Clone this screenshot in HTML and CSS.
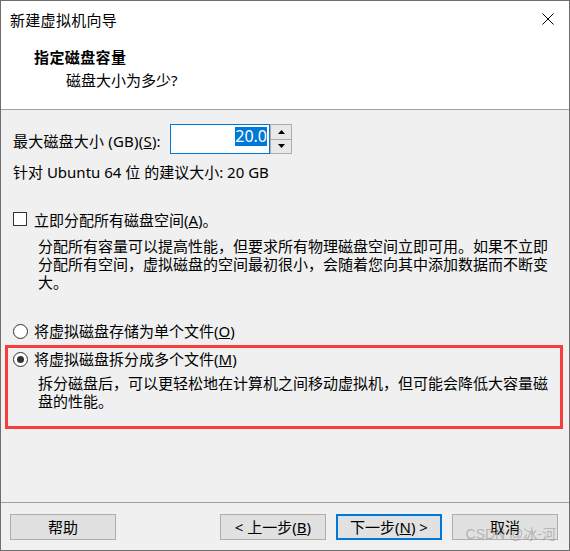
FILE: index.html
```html
<!DOCTYPE html>
<html lang="zh-CN">
<head>
<meta charset="utf-8">
<title>新建虚拟机向导</title>
<link rel="stylesheet" href="styles.css">
</head>
<body>
<div class="window">
  <div class="top">
    <div class="titlebar">
      <span class="title">新建虚拟机向导</span>
      <svg class="close" width="12" height="12" viewBox="0 0 12 12"><path d="M0.5 0.5 L11.5 11.5 M11.5 0.5 L0.5 11.5" stroke="#000" stroke-width="1" fill="none"/></svg>
    </div>
    <div class="header">
      <div class="h-title">指定磁盘容量</div>
      <div class="h-sub">磁盘大小为多少?</div>
    </div>
  </div>
  <div class="body">
    <div class="row size-row">
      <span class="size-label">最大磁盘大小 (GB)(<u>S</u>):</span>
      <div class="spin">
        <div class="spin-input"><span class="sel">20.0</span></div>
        <div class="spin-btns">
          <div class="spin-btn"><svg width="7" height="4" viewBox="0 0 7 4"><path d="M3.5 0 L7 4 L0 4 Z" fill="#000"/></svg></div>
          <div class="spin-btn"><svg width="7" height="4" viewBox="0 0 7 4"><path d="M0 0 L7 0 L3.5 4 Z" fill="#000"/></svg></div>
        </div>
      </div>
    </div>
    <div class="row rec">针对 Ubuntu 64 位 的建议大小: 20 GB</div>
    <div class="row check-row">
      <span class="checkbox"></span>
      <span>立即分配所有磁盘空间(<u>A</u>)。</span>
    </div>
    <div class="desc desc1">分配所有容量可以提高性能，但要求所有物理磁盘空间立即可用。如果不立即<br>分配所有空间，虚拟磁盘的空间最初很小，会随着您向其中添加数据而不断变<br>大。</div>
    <div class="row radio-row r1">
      <span class="radio"></span>
      <span>将虚拟磁盘存储为单个文件(<u>O</u>)</span>
    </div>
    <div class="marked">
      <div class="row radio-row r2">
        <span class="radio checked"></span>
        <span>将虚拟磁盘拆分成多个文件(<u>M</u>)</span>
      </div>
      <div class="desc desc2">拆分磁盘后，可以更轻松地在计算机之间移动虚拟机，但可能会降低大容量磁<br>盘的性能。</div>
    </div>
  </div>
  <div class="footer">
    <button class="btn">帮助</button>
    <div class="btn-group">
      <button class="btn">&lt; 上一步(<u>B</u>)</button>
      <button class="btn focused">下一步(<u>N</u>) &gt;</button>
      <button class="btn">取消</button>
    </div>
    <span class="watermark">CSDN @冰-河</span>
  </div>
</div>
</body>
</html>
```
FILE: styles.css
```css
* { box-sizing: border-box; }
html, body { margin: 0; padding: 0; }
body {
  font-family: "Noto Sans", "Noto Sans CJK SC", sans-serif;
  font-size: 15px;
  color: #000;
  background: #f0f0f0;
}
.window {
  position: relative;
  width: 570px;
  height: 551px;
  border: 1px solid #6e6e6e;
  background: #f0f0f0;
  display: flex;
  flex-direction: column;
}
.top {
  height: 109px;
  background: #fff;
  border-bottom: 1px solid #a0a0a0;
  flex: none;
}
.titlebar {
  height: 38px;
  display: flex;
  align-items: flex-start;
  justify-content: space-between;
  padding: 9px 15px 0 9px;
}
.title { line-height: 20px; letter-spacing: 0.3px; }
.close { margin-top: 3px; }
.header { padding: 8px 0 0 33px; }
.h-title { font-weight: bold; line-height: 20px; letter-spacing: 0.4px; }
.h-sub { line-height: 20px; margin-top: 3px; padding-left: 32px; }

.body { flex: 1; }
.row { display: flex; align-items: center; line-height: 20px; padding-left: 12px; }
.size-row { margin-top: 14px; height: 30px; }
.size-label { width: 157px; margin-top: 3px; white-space: nowrap; letter-spacing: 0.2px; }
.spin { display: flex; height: 30px; }
.spin-input {
  width: 100px;
  height: 30px;
  border: 1px solid #0078d7;
  background: #fff;
  display: flex;
  justify-content: flex-end;
  align-items: flex-start;
  padding: 2px 2px 0 0;
}
.sel { background: #0078d7; color: #fff; line-height: 19px; font-size: 16px; }
.spin-btns { display: flex; flex-direction: column; width: 22px; border: 1px solid #adadad; background: #adadad; gap: 1px; }
.spin-btn { flex: 1; background: #e8e8e8; display: flex; align-items: center; justify-content: center; }
.rec { margin-top: 8px; }
.check-row { margin-top: 28px; }
.checkbox {
  width: 14px; height: 14px; border: 1px solid #333; background: #fff; margin-right: 7px; margin-top: -3px; flex: none;
}
.desc { padding-left: 37px; line-height: 18px; white-space: nowrap; }
.desc1 { margin-top: 7px; }
.r1 { margin-top: 30px; }
.radio {
  width: 15px; height: 15px; border: 1px solid #333; border-radius: 50%; background: #fff; margin-right: 6px; flex: none;
  display: flex; align-items: center; justify-content: center;
}
.radio.checked::after { content: ""; width: 7px; height: 7px; border-radius: 50%; background: #333; }
.marked {
  margin: 4px 6px 0 4px;
  border: 3px solid #f63c3c;
  padding: 1px 0 16px 0;
}
.marked .row { padding-left: 5px; }
.marked .desc { padding-left: 30px; }
.desc2 { margin-top: 5px; }

.footer {
  flex: none;
  height: 48px;
  border-top: 1px solid #a0a0a0;
  padding: 11px 11px 0 9px;
  display: flex;
  justify-content: space-between;
  align-items: flex-start;
}
.btn-group { display: flex; gap: 10px; }
.btn {
  width: 106px;
  height: 26px;
  font: inherit;
  font-size: 15px;
  line-height: 20px;
  padding: 0;
  background: #e1e1e1;
  border: 1px solid #adadad;
  color: #000;
}
.btn.focused { border: 2px solid #0078d7; }
.watermark {
  position: absolute;
  right: 13px;
  bottom: 8px;
  font-size: 14px;
  line-height: 16px;
  color: rgba(140, 140, 140, 0.55);
  font-family: "Liberation Sans", "Noto Sans CJK SC", sans-serif;
}
```
